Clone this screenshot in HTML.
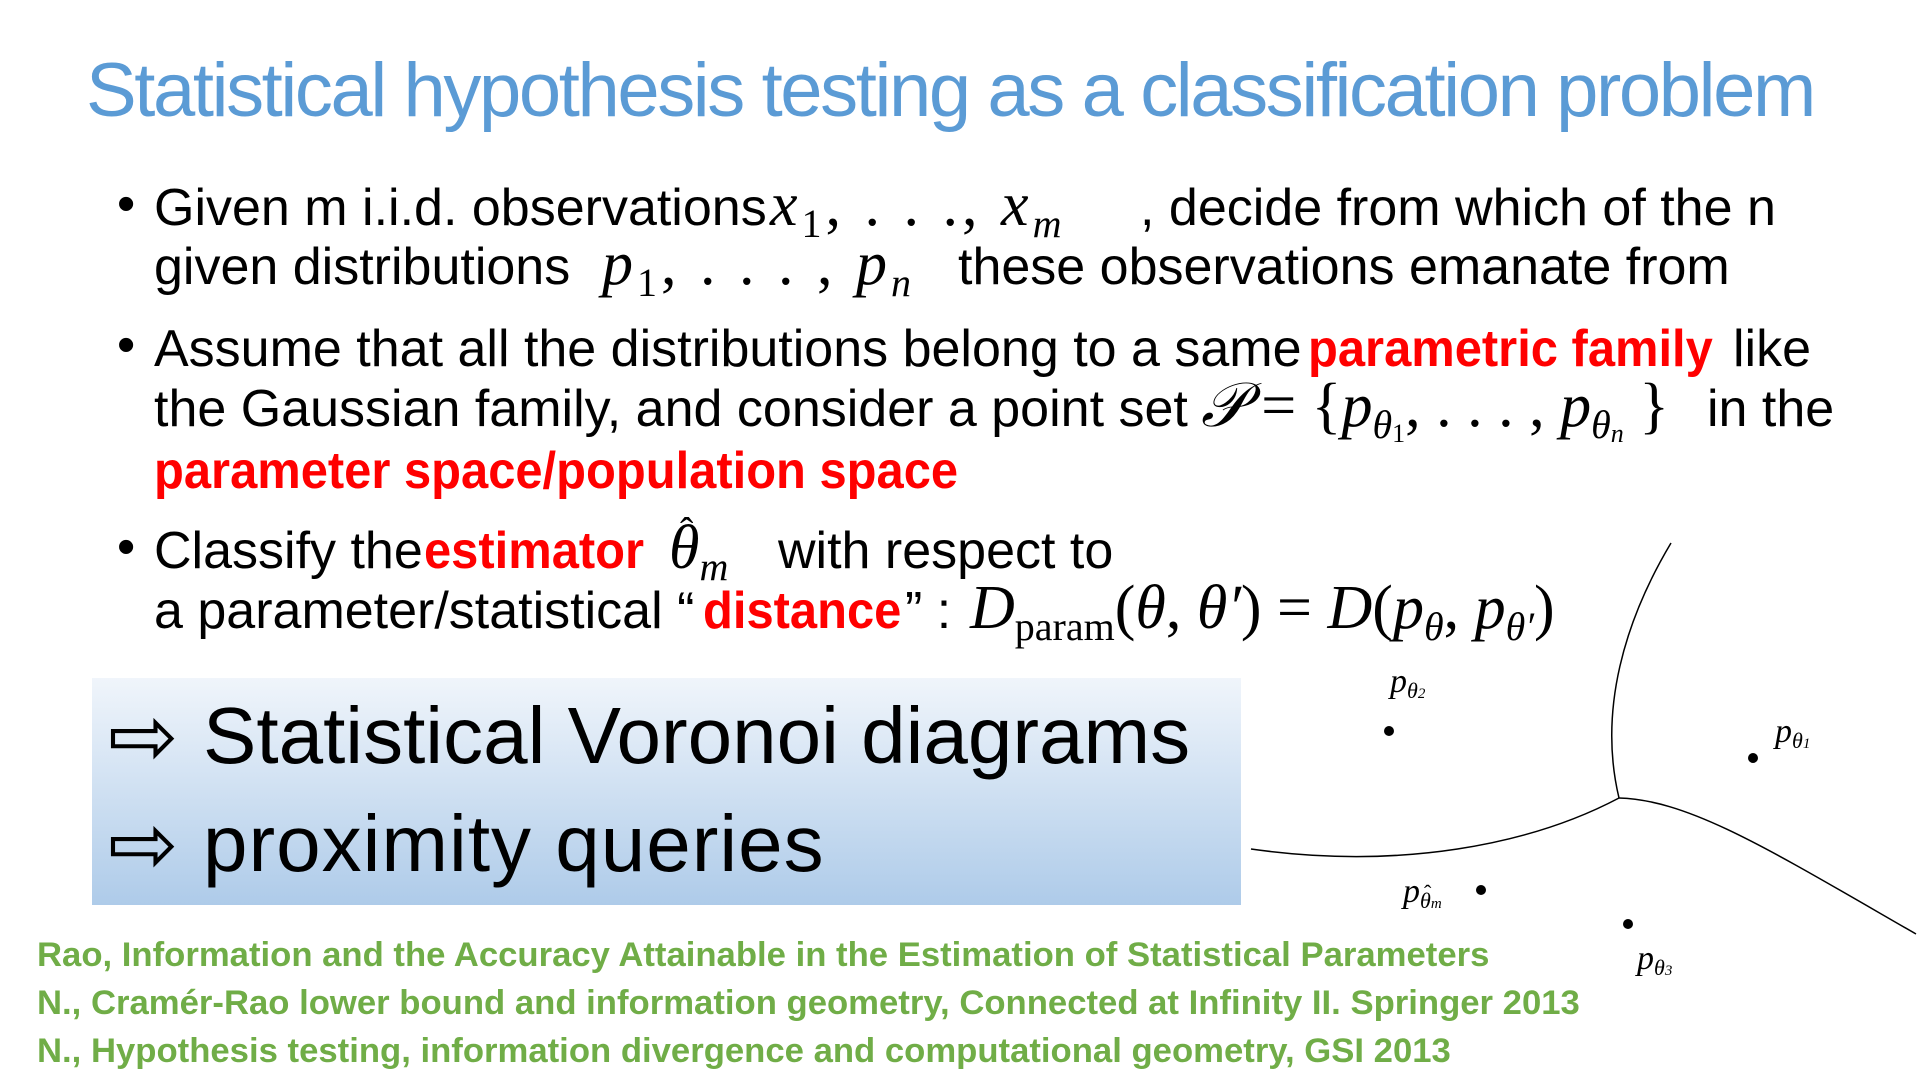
<!DOCTYPE html>
<html><head><meta charset="utf-8"><style>
html,body{margin:0;padding:0;background:#fff;}
body{width:1920px;height:1080px;position:relative;overflow:hidden;font-family:"Liberation Sans",sans-serif;}
.a{position:absolute;white-space:nowrap;line-height:1;}
.t{font-size:52px;color:#000;}
.r{font-size:52px;color:#ff0000;font-weight:bold;transform:scaleX(.94);transform-origin:left;}
.m{font-family:"Liberation Serif",serif;font-size:62px;color:#000;}
.m i{font-style:italic;}
.m sub{font-size:40px;vertical-align:-12px;}
.ref{font-size:34px;color:#70ad47;font-weight:bold;transform:scaleX(1.02);transform-origin:left;left:37px;}
.lbl{font-family:"Liberation Serif",serif;font-style:italic;font-size:34px;}
.lbl sub{font-size:22px;vertical-align:-6px;}
</style></head><body>
<div class="a" style="left:86px;top:53px;font-size:76px;color:#5b9bd5;letter-spacing:-2.4px;">Statistical hypothesis testing as a classification problem</div>

<div class="a t" style="left:117px;top:178px;">•</div>
<div class="a t" style="left:154px;top:182px;">Given m i.i.d. observations</div>
<div class="a m" style="left:770px;top:174px;letter-spacing:4px;"><i>x</i><sub>1</sub>, . . ., <i>x</i><sub><i>m</i></sub></div>
<div class="a t" style="left:1140px;top:182px;">, decide from which of the n</div>

<div class="a t" style="left:154px;top:241px;">given distributions</div>
<div class="a m" style="left:602px;top:233px;letter-spacing:4px;"><i>p</i><sub>1</sub>, . . . , <i>p</i><sub><i>n</i></sub></div>
<div class="a t" style="left:958px;top:241px;">these observations emanate from</div>

<div class="a t" style="left:117px;top:319px;">•</div>
<div class="a t" style="left:154px;top:323px;">Assume that all the distributions belong to a same</div>
<div class="a r" style="left:1308px;top:323px;">parametric family</div>
<div class="a t" style="left:1733px;top:323px;">like</div>

<div class="a t" style="left:154px;top:383px;">the Gaussian family, and consider a point set</div>
<div class="a m" style="left:1201px;top:375px;"><i>𝒫</i> = {<i>p</i><sub><i>θ</i><sub style="font-size:26px;vertical-align:-4px">1</sub></sub>, . . . , <i>p</i><sub><i>θ</i><sub style="font-size:26px;vertical-align:-4px"><i>n</i></sub></sub> }</div>
<div class="a t" style="left:1707px;top:383px;">in the</div>

<div class="a r" style="left:154px;top:445px;">parameter space/population space</div>

<div class="a t" style="left:117px;top:521px;">•</div>
<div class="a t" style="left:154px;top:525px;">Classify the</div>
<div class="a r" style="left:424px;top:525px;">estimator</div>
<div class="a m" style="left:669px;top:517px;"><i>θ</i><sub><i>m</i></sub></div>
<div class="a m" style="left:680px;top:512px;font-size:40px;">ˆ</div>
<div class="a t" style="left:778px;top:525px;">with respect to</div>

<div class="a t" style="left:154px;top:585px;">a parameter/statistical “</div>
<div class="a r" style="left:703px;top:585px;">distance</div>
<div class="a t" style="left:905px;top:585px;">” :</div>
<div class="a m" style="left:970px;top:577px;"><i>D</i><sub>param</sub>(<i>θ</i>, <i>θ′</i>) = <i>D</i>(<i>p</i><sub><i>θ</i></sub>, <i>p</i><sub><i>θ′</i></sub>)</div>

<div class="a" style="left:92px;top:678px;width:1149px;height:227px;background:linear-gradient(#f0f5fb,#cfe0f2 50%,#aecbe9);"></div>
<div class="a" style="left:108px;top:694px;font-size:84px;">⇨</div>
<div class="a" style="left:203px;top:696px;font-size:80px;">Statistical Voronoi diagrams</div>
<div class="a" style="left:108px;top:802px;font-size:84px;">⇨</div>
<div class="a" style="left:203px;top:804px;font-size:80px;letter-spacing:1px;">proximity queries</div>

<div class="a ref" style="top:938px;">Rao, Information and the Accuracy Attainable in the Estimation of Statistical Parameters</div>
<div class="a ref" style="top:986px;">N., Cramér-Rao lower bound and information geometry, Connected at Infinity II. Springer 2013</div>
<div class="a ref" style="top:1034px;">N., Hypothesis testing, information divergence and computational geometry, GSI 2013</div>

<svg class="a" style="left:0;top:0" width="1920" height="1080">
<g fill="none" stroke="#000" stroke-width="1.5">
<path d="M1671,543 C1625,620 1598,710 1619,798"/>
<path d="M1251,849 C1400,870 1530,845 1619,798"/>
<path d="M1619,798 C1690,800 1770,850 1916,934"/>
</g>
<g fill="#000">
<circle cx="1389" cy="731" r="5"/>
<circle cx="1753" cy="758" r="5"/>
<circle cx="1481" cy="890" r="5"/>
<circle cx="1628" cy="924" r="5"/>
</g>
</svg>
<div class="a lbl" style="left:1390px;top:665px;">p<sub>θ<span style="font-size:15px">2</span></sub></div>
<div class="a lbl" style="left:1775px;top:715px;">p<sub>θ<span style="font-size:15px">1</span></sub></div>
<div class="a lbl" style="left:1403px;top:875px;">p<sub>θ<span style="font-size:15px">m</span></sub></div>
<div class="a lbl" style="left:1424px;top:882px;font-size:22px;font-style:normal;">ˆ</div>
<div class="a lbl" style="left:1637px;top:942px;">p<sub>θ<span style="font-size:15px">3</span></sub></div>
</body></html>
